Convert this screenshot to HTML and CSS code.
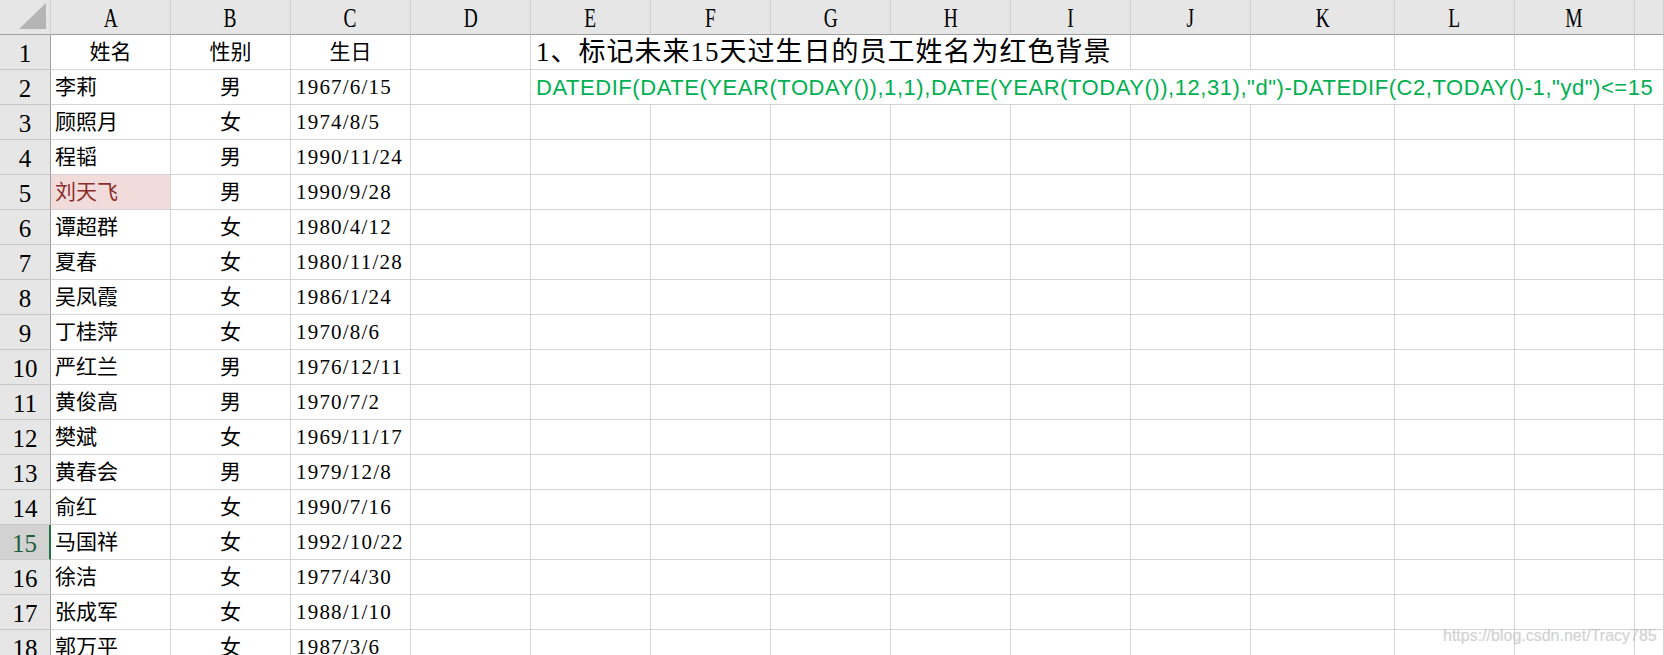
FILE: index.html
```html
<!DOCTYPE html>
<html lang="zh">
<head>
<meta charset="utf-8">
<title>Sheet</title>
<link rel="stylesheet" href="styles.css">
</head>
<body>
<div class="sheet">
  <div class="corner"><svg width="27" height="26" viewBox="0 0 27 26"><polygon points="0,26 27,26 27,0" fill="#b5b5b5"/></svg></div>
  <div class="colhdr"><span>A</span></div>
  <div class="colhdr"><span>B</span></div>
  <div class="colhdr"><span>C</span></div>
  <div class="colhdr"><span>D</span></div>
  <div class="colhdr"><span>E</span></div>
  <div class="colhdr"><span>F</span></div>
  <div class="colhdr"><span>G</span></div>
  <div class="colhdr"><span>H</span></div>
  <div class="colhdr"><span>I</span></div>
  <div class="colhdr"><span>J</span></div>
  <div class="colhdr"><span>K</span></div>
  <div class="colhdr"><span>L</span></div>
  <div class="colhdr"><span>M</span></div>
  <div class="colhdr"></div>

  <div class="rowhdr">1</div>
  <div class="cell center">姓名</div>
  <div class="cell center">性别</div>
  <div class="cell center">生日</div>
  <div class="cell"></div>
  <div class="cell title span5">1、标记未来15天过生日的员工姓名为红色背景</div>
  <div class="cell"></div><div class="cell"></div><div class="cell"></div><div class="cell"></div><div class="cell"></div>

  <div class="rowhdr">2</div>
  <div class="cell">李莉</div>
  <div class="cell center">男</div>
  <div class="cell date">1967/6/15</div>
  <div class="cell"></div>
  <div class="cell formula span10">DATEDIF(DATE(YEAR(TODAY()),1,1),DATE(YEAR(TODAY()),12,31),"d")-DATEDIF(C2,TODAY()-1,"yd")&lt;=15</div>

  <div class="rowhdr">3</div>
  <div class="cell">顾照月</div><div class="cell center">女</div><div class="cell date">1974/8/5</div>
  <div class="cell"></div><div class="cell"></div><div class="cell"></div><div class="cell"></div><div class="cell"></div><div class="cell"></div><div class="cell"></div><div class="cell"></div><div class="cell"></div><div class="cell"></div><div class="cell"></div>

  <div class="rowhdr">4</div>
  <div class="cell">程韬</div><div class="cell center">男</div><div class="cell date">1990/11/24</div>
  <div class="cell"></div><div class="cell"></div><div class="cell"></div><div class="cell"></div><div class="cell"></div><div class="cell"></div><div class="cell"></div><div class="cell"></div><div class="cell"></div><div class="cell"></div><div class="cell"></div>

  <div class="rowhdr">5</div>
  <div class="cell marked">刘天飞</div><div class="cell center">男</div><div class="cell date">1990/9/28</div>
  <div class="cell"></div><div class="cell"></div><div class="cell"></div><div class="cell"></div><div class="cell"></div><div class="cell"></div><div class="cell"></div><div class="cell"></div><div class="cell"></div><div class="cell"></div><div class="cell"></div>

  <div class="rowhdr">6</div>
  <div class="cell">谭超群</div><div class="cell center">女</div><div class="cell date">1980/4/12</div>
  <div class="cell"></div><div class="cell"></div><div class="cell"></div><div class="cell"></div><div class="cell"></div><div class="cell"></div><div class="cell"></div><div class="cell"></div><div class="cell"></div><div class="cell"></div><div class="cell"></div>

  <div class="rowhdr">7</div>
  <div class="cell">夏春</div><div class="cell center">女</div><div class="cell date">1980/11/28</div>
  <div class="cell"></div><div class="cell"></div><div class="cell"></div><div class="cell"></div><div class="cell"></div><div class="cell"></div><div class="cell"></div><div class="cell"></div><div class="cell"></div><div class="cell"></div><div class="cell"></div>

  <div class="rowhdr">8</div>
  <div class="cell">吴凤霞</div><div class="cell center">女</div><div class="cell date">1986/1/24</div>
  <div class="cell"></div><div class="cell"></div><div class="cell"></div><div class="cell"></div><div class="cell"></div><div class="cell"></div><div class="cell"></div><div class="cell"></div><div class="cell"></div><div class="cell"></div><div class="cell"></div>

  <div class="rowhdr">9</div>
  <div class="cell">丁桂萍</div><div class="cell center">女</div><div class="cell date">1970/8/6</div>
  <div class="cell"></div><div class="cell"></div><div class="cell"></div><div class="cell"></div><div class="cell"></div><div class="cell"></div><div class="cell"></div><div class="cell"></div><div class="cell"></div><div class="cell"></div><div class="cell"></div>

  <div class="rowhdr">10</div>
  <div class="cell">严红兰</div><div class="cell center">男</div><div class="cell date">1976/12/11</div>
  <div class="cell"></div><div class="cell"></div><div class="cell"></div><div class="cell"></div><div class="cell"></div><div class="cell"></div><div class="cell"></div><div class="cell"></div><div class="cell"></div><div class="cell"></div><div class="cell"></div>

  <div class="rowhdr">11</div>
  <div class="cell">黄俊高</div><div class="cell center">男</div><div class="cell date">1970/7/2</div>
  <div class="cell"></div><div class="cell"></div><div class="cell"></div><div class="cell"></div><div class="cell"></div><div class="cell"></div><div class="cell"></div><div class="cell"></div><div class="cell"></div><div class="cell"></div><div class="cell"></div>

  <div class="rowhdr">12</div>
  <div class="cell">樊斌</div><div class="cell center">女</div><div class="cell date">1969/11/17</div>
  <div class="cell"></div><div class="cell"></div><div class="cell"></div><div class="cell"></div><div class="cell"></div><div class="cell"></div><div class="cell"></div><div class="cell"></div><div class="cell"></div><div class="cell"></div><div class="cell"></div>

  <div class="rowhdr">13</div>
  <div class="cell">黄春会</div><div class="cell center">男</div><div class="cell date">1979/12/8</div>
  <div class="cell"></div><div class="cell"></div><div class="cell"></div><div class="cell"></div><div class="cell"></div><div class="cell"></div><div class="cell"></div><div class="cell"></div><div class="cell"></div><div class="cell"></div><div class="cell"></div>

  <div class="rowhdr">14</div>
  <div class="cell">俞红</div><div class="cell center">女</div><div class="cell date">1990/7/16</div>
  <div class="cell"></div><div class="cell"></div><div class="cell"></div><div class="cell"></div><div class="cell"></div><div class="cell"></div><div class="cell"></div><div class="cell"></div><div class="cell"></div><div class="cell"></div><div class="cell"></div>

  <div class="rowhdr selected">15</div>
  <div class="cell">马国祥</div><div class="cell center">女</div><div class="cell date">1992/10/22</div>
  <div class="cell"></div><div class="cell"></div><div class="cell"></div><div class="cell"></div><div class="cell"></div><div class="cell"></div><div class="cell"></div><div class="cell"></div><div class="cell"></div><div class="cell"></div><div class="cell"></div>

  <div class="rowhdr">16</div>
  <div class="cell">徐洁</div><div class="cell center">女</div><div class="cell date">1977/4/30</div>
  <div class="cell"></div><div class="cell"></div><div class="cell"></div><div class="cell"></div><div class="cell"></div><div class="cell"></div><div class="cell"></div><div class="cell"></div><div class="cell"></div><div class="cell"></div><div class="cell"></div>

  <div class="rowhdr">17</div>
  <div class="cell">张成军</div><div class="cell center">女</div><div class="cell date">1988/1/10</div>
  <div class="cell"></div><div class="cell"></div><div class="cell"></div><div class="cell"></div><div class="cell"></div><div class="cell"></div><div class="cell"></div><div class="cell"></div><div class="cell"></div><div class="cell"></div><div class="cell"></div>

  <div class="rowhdr">18</div>
  <div class="cell">郭万平</div><div class="cell center">女</div><div class="cell date">1987/3/6</div>
  <div class="cell"></div><div class="cell"></div><div class="cell"></div><div class="cell"></div><div class="cell"></div><div class="cell"></div><div class="cell"></div><div class="cell"></div><div class="cell"></div><div class="cell"></div><div class="cell"></div>
</div>
<div class="watermark">https://blog.csdn.net/Tracy785</div>
</body>
</html>
```
FILE: styles.css
```css
html, body {
  margin: 0;
  padding: 0;
  background: #ffffff;
  width: 1664px;
  height: 655px;
  overflow: hidden;
}
body {
  position: relative;
  font-family: "Liberation Serif", "Noto Sans CJK SC", serif;
  color: #000;
}
.sheet {
  display: grid;
  grid-template-columns: 51px repeat(10, 120px) 144px 120px 120px 1fr;
  grid-auto-rows: 35px;
}
.corner {
  background: #e6e6e6;
  border-right: 1px solid #cfcfcf;
  border-bottom: 1px solid #9f9f9f;
  box-sizing: border-box;
  display: flex;
  align-items: flex-end;
  justify-content: flex-end;
  padding: 0 4px 5px 0;
}
.colhdr {
  background: #e6e6e6;
  border-right: 1px solid #cfcfcf;
  border-bottom: 1px solid #9f9f9f;
  box-sizing: border-box;
  display: flex;
  align-items: center;
  justify-content: center;
  font-size: 27px;
  line-height: 1;
}
.colhdr span {
  display: inline-block;
  transform: scaleX(0.72);
  padding-top: 2px;
}
.rowhdr {
  background: #e6e6e6;
  border-right: 1px solid #9f9f9f;
  border-bottom: 1px solid #c8c8c8;
  box-sizing: border-box;
  display: flex;
  align-items: center;
  justify-content: center;
  font-size: 25px;
  line-height: 1;
  padding-top: 2px;
}
.rowhdr.selected {
  background: #d2d2d2;
  border-right: 2px solid #217346;
  color: #1e5f3c;
}
.cell {
  border-right: 1px solid #d4d4d4;
  border-bottom: 1px solid #d4d4d4;
  box-sizing: border-box;
  display: flex;
  align-items: center;
  padding: 1px 0 0 4px;
  font-size: 21px;
  line-height: 1;
  white-space: nowrap;
  overflow: visible;
}
.cell.center {
  justify-content: center;
  padding-left: 0;
}
.cell.date {
  letter-spacing: 1.2px;
  padding-left: 5px;
}
.cell.marked {
  background: #f2dcdb;
  color: #8b2e2b;
}
.span5 {
  grid-column: span 5;
}
.span10 {
  grid-column: span 10;
}
.cell.title {
  font-size: 27px;
  letter-spacing: 1px;
  padding-left: 5px;
}
.cell.formula {
  font-family: "Liberation Sans", Arial, sans-serif;
  font-size: 22px;
  letter-spacing: 0.55px;
  color: #00b050;
  padding-left: 5px;
}
.watermark {
  position: absolute;
  left: 1443px;
  top: 627px;
  font-family: "Liberation Sans", Arial, sans-serif;
  font-size: 16px;
  color: rgba(200, 200, 200, 0.55);
  text-shadow: 0 0 1px rgba(160,160,160,0.4);
  white-space: nowrap;
}
```
